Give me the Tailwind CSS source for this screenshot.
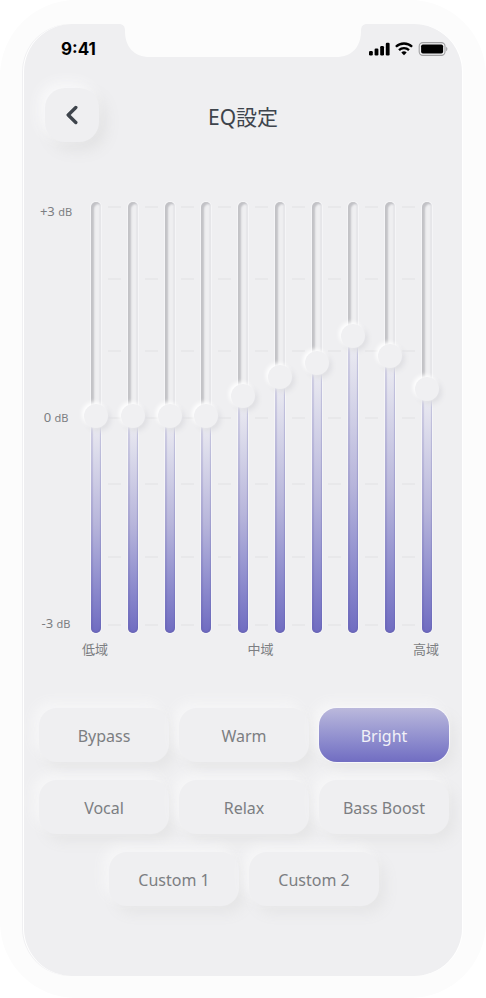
<!DOCTYPE html>
<html lang="ja">
<head>
  <meta charset="UTF-8">
  <meta name="viewport" content="width=device-width, initial-scale=1.0">
  <title>EQ設定</title>
  <script src="https://cdn.jsdelivr.net/npm/@tailwindcss/browser@4"></script>
</head>
<body class="min-h-screen bg-white font-['Noto_Sans','Noto_Sans_CJK_JP',sans-serif] text-[#7c7e82]">
  <!-- Phone frame -->
  <div class="mx-auto flex min-h-screen max-w-lg flex-col rounded-[76px] bg-[#fcfcfc] px-6 pt-6 pb-[22px]">
    <main class="flex flex-1 flex-col overflow-hidden rounded-[48px] bg-[#efeff1] shadow-[-1px_0_#fff,-2px_0_#f0f0f2,1px_0_#fff]">

      <!-- Status bar -->
      <div class="flex text-black">
        <div class="flex flex-1 items-end justify-center pl-[14px] font-['Inter',sans-serif] text-[17px] leading-4 font-bold">9:41</div>
        <svg class="h-[33px] w-[248px]" viewBox="0 0 248 33" fill="#fcfcfc" aria-hidden="true">
          <path d="M0 0C4 0 6 2 6 7C6 23 15 33 31 33H217C233 33 242 23 242 7C242 2 244 0 248 0Z"/>
        </svg>
        <div class="flex flex-1 items-end justify-end gap-[5px] pr-[14px] pb-px">
          <svg class="h-[14px] w-[21px]" viewBox="0 0 21 14" aria-label="Signal">
            <rect x="0" y="9" width="3.8" height="4.4" rx="1.2"/>
            <rect x="5.6" y="6.6" width="3.8" height="6.8" rx="1.2"/>
            <rect x="11.2" y="4" width="3.8" height="9.4" rx="1.2"/>
            <rect x="16.8" y=".8" width="3.8" height="12.6" rx="1.2"/>
          </svg>
          <svg class="h-[14px] w-[18px]" viewBox="0 0 18 14" fill="none" stroke="#000" stroke-width="2.3" aria-label="Wi-Fi">
            <path d="M.9 4.8A11.6 11.6 0 0 1 17.1 4.8"/>
            <path d="M4 8.1A7.2 7.2 0 0 1 14 8.1"/>
            <path d="M9 13.2L6.3 10.6A4 4 0 0 1 11.7 10.6Z" fill="#000" stroke="none"/>
          </svg>
          <svg class="h-[14px] w-[30px]" viewBox="0 0 30 14" aria-label="Battery">
            <rect x="1.2" y=".6" width="25.8" height="12.8" rx="3.6" fill="none" stroke="#a0a0a2" stroke-width="1.1"/>
            <rect x="3.1" y="2.5" width="22" height="9" rx="1.8"/>
            <path d="M28.2 4.8C29.8 5.5 29.8 8.5 28.2 9.2Z" fill="#a0a0a2"/>
          </svg>
        </div>
      </div>

      <!-- Header -->
      <header class="mt-[31px] grid grid-cols-[54px_1fr_54px] items-center px-[21px]">
        <button type="button" aria-label="戻る" class="flex h-[54px] items-center justify-center rounded-[20px] bg-[#efeff1] shadow-[-5px_-5px_14px_#fafafb,6px_7px_16px_#e0e0e1]">
          <svg class="h-[20px] w-[12px]" viewBox="0 0 12 20" fill="none" stroke="#3e444c" stroke-width="3.4" stroke-linecap="round" stroke-linejoin="round">
            <path d="M9.8 2.5L2.2 10L9.8 17.5"/>
          </svg>
        </button>
        <h1 class="pt-1 text-center text-[21px] leading-8 text-[#3e444c]">EQ設定</h1>
      </header>

      <!-- Equalizer -->
      <section class="mt-[60px] flex">
        <div class="flex w-16 shrink-0 flex-col items-center justify-between text-[13px] leading-[18px]">
          <div>+3 <span class="text-[11px]">dB</span></div>
          <div>0 <span class="text-[11px]">dB</span></div>
          <div>-3 <span class="text-[11px]">dB</span></div>
        </div>
        <div id="bands" class="mr-[30px] ml-[3px] flex h-[431px] flex-1 justify-between"></div>
      </section>
      <div class="mt-[6px] mr-[23px] ml-[58px] flex justify-between text-[13px] leading-5">
        <span>低域</span><span>中域</span><span>高域</span>
      </div>

      <!-- Presets -->
      <section id="presets" class="mt-[49px] mb-8 flex flex-wrap justify-center gap-x-[10px] gap-y-[18px] pr-[13px] pl-[15px]"></section>
    </main>
  </div>

  <script>
    const levels = [0.02, 0.02, 0.02, 0.02, 0.32, 0.6, 0.8, 1.2, 0.9, 0.42];
    const lines = [72, 72, 67, 66, 73, 68];
    const presets = ['Bypass', 'Warm', 'Bright', 'Vocal', 'Relax', 'Bass Boost', 'Custom 1', 'Custom 2'];

    const trackClass = 'grid w-[10px] grid-cols-[24px] justify-center rounded-full bg-[#efeff1] shadow-[inset_3px_2px_2px_#c2c2c6,inset_-2px_0_1px_#e6e6e9,0_0_0_1px_#f5f5f7]';
    const fillClass = 'col-start-1 row-start-1 w-[10px] self-end justify-self-center rounded-b-full bg-linear-to-b from-[#efeff3] via-[#b7b5db] via-50% to-[#706cc1] shadow-[inset_2px_0_1px_#5550a02e,inset_-1px_-1px_1px_#5550a040]';
    const rangeClass = 'z-10 col-start-1 row-start-1 h-[431px] w-6 cursor-pointer appearance-none bg-transparent [writing-mode:vertical-lr] [direction:rtl] [&::-webkit-slider-thumb]:size-6 [&::-webkit-slider-thumb]:appearance-none [&::-webkit-slider-thumb]:rounded-full [&::-webkit-slider-thumb]:bg-[#f0f0f2] [&::-webkit-slider-thumb]:shadow-[-2px_-2px_4px_#fff,3px_3px_5px_#dfdfe3]';

    // the thumb is 24px tall, so its centre starts 12px above the bottom
    const fillHeight = v => 'calc(12px + (100% - 24px) * ' + (Number(v) + 3) / 6 + ')';

    document.getElementById('bands').innerHTML = levels.map((v, i) => {
      const ticks = i < levels.length - 1
        ? '<div class="flex w-[13px] flex-col pt-1 pb-[7px]">' + lines.map(h => `<div class="border-t-2 border-[#e8e8ea] last:border-b-2" style="flex: ${h} 0 0"></div>`).join('') + '</div>'
        : '';
      return `<div class="${trackClass}">
        <div class="${fillClass}" style="height: ${fillHeight(v)}"></div>
        <input type="range" min="-3" max="3" step="0.01" value="${v}" aria-label="Band ${i + 1}" class="${rangeClass}">
      </div>${ticks}`;
    }).join('');

    document.querySelectorAll('#bands input').forEach(input => {
      input.addEventListener('input', () => {
        input.previousElementSibling.style.height = fillHeight(input.value);
      });
    });

    const presetClass = 'h-[54px] w-[130px] rounded-[18px] pt-px text-base shadow-[-6px_-6px_12px_#f6f6f7,6px_7px_14px_#e5e5e6] ';
    const normalClass = 'bg-[#efeff1]';
    const activeClass = 'bg-linear-to-b from-[#bbb9dc] to-[#716dc2] text-[#f1f1f8] ring-1 ring-[#f7f7fa]';

    function showPresets(active) {
      const box = document.getElementById('presets');
      box.innerHTML = presets.map(name =>
        `<button type="button" class="${presetClass}${name === active ? activeClass : normalClass}">${name}</button>`
      ).join('');
      box.querySelectorAll('button').forEach(b => b.addEventListener('click', () => showPresets(b.textContent)));
    }
    showPresets('Bright');
  </script>
</body>
</html>
